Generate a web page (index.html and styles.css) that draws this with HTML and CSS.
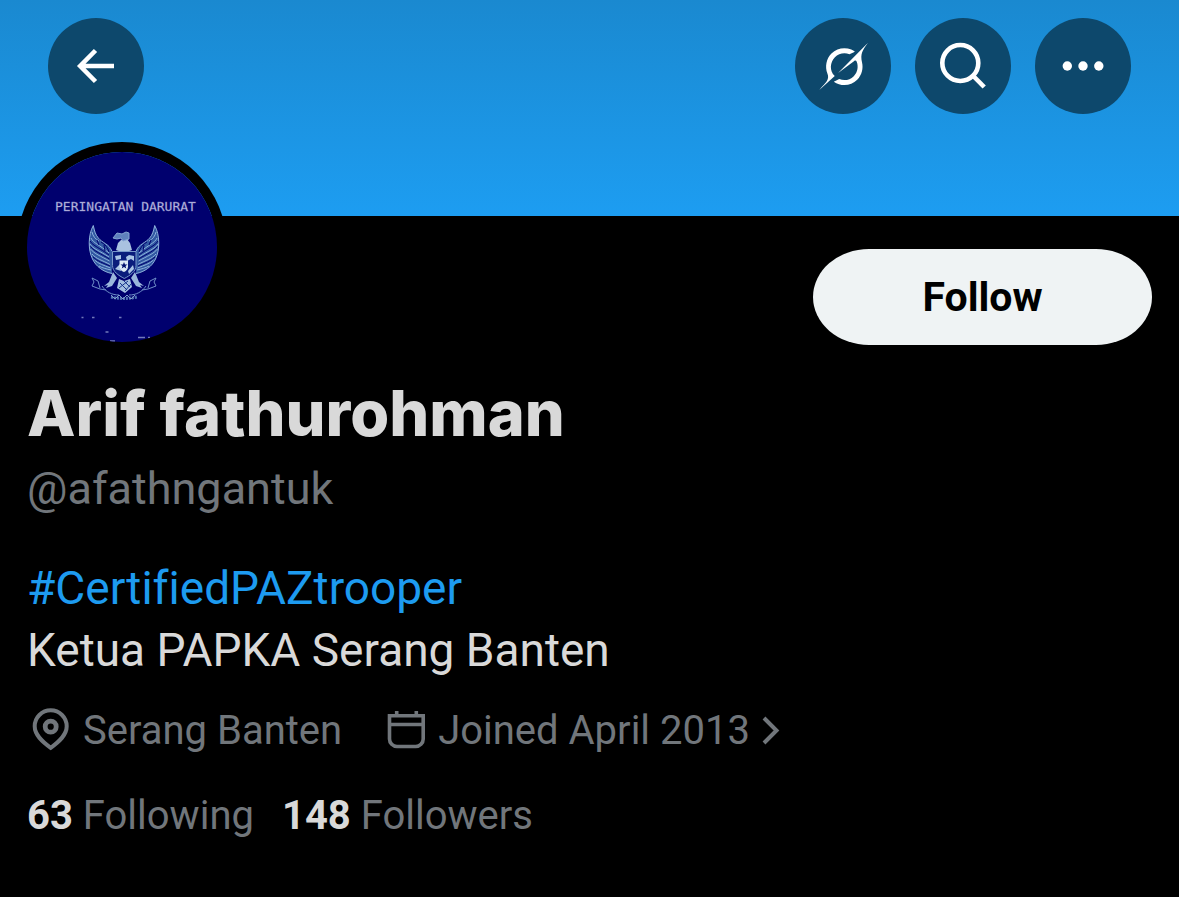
FILE: index.html
```html
<!DOCTYPE html>
<html lang="en">
<head>
<meta charset="utf-8">
<meta name="viewport" content="width=device-width, initial-scale=1">
<title>Arif fathurohman (@afathngantuk)</title>
<link rel="stylesheet" href="styles.css">
</head>
<body>
<header class="banner">
  <button class="round-button" type="button" aria-label="Back">
    <svg viewBox="0 0 96 96" fill="none" stroke="currentColor" stroke-width="4.6"><path d="M47.5 32.5 32.2 48l15.3 15.5M32.5 48H66"/></svg>
  </button>
  <div class="banner-actions">
    <button class="round-button" type="button" aria-label="Grok">
      <svg viewBox="0 0 96 96" fill="currentColor"><path transform="translate(24.3 24.7) scale(1.476)" d="M12.745 20.54l10.97-8.19c.539-.4 1.307-.244 1.564.38 1.349 3.288.746 7.241-1.938 9.955-2.683 2.714-6.417 3.31-9.83 1.954l-3.728 1.745c5.347 3.697 11.84 2.782 15.898-1.324 3.219-3.255 4.216-7.692 3.284-11.693l.008.009c-1.351-5.878.332-8.227 3.782-13.031L33 0l-4.54 4.59v-.014L12.743 20.544M10.48 22.531c-3.837-3.707-3.175-9.446.1-12.755 2.42-2.449 6.388-3.448 9.852-1.979l3.72-1.737c-.67-.49-1.53-1.017-2.515-1.387-4.455-1.854-9.789-.931-13.41 2.728-3.483 3.523-4.579 8.94-2.697 13.561 1.405 3.454-.899 5.898-3.22 8.364C1.49 30.2.666 31.074 0 32l10.478-9.466"/></svg>
    </button>
    <button class="round-button" type="button" aria-label="Search">
      <svg viewBox="0 0 96 96" fill="none" stroke="currentColor" stroke-width="4.6"><circle cx="45.3" cy="45" r="18"/><path d="M57.8 57.5 69.2 69"/></svg>
    </button>
    <button class="round-button" type="button" aria-label="More">
      <svg viewBox="0 0 96 96" fill="currentColor"><circle cx="32.3" cy="48" r="4.7"/><circle cx="48" cy="48" r="4.7"/><circle cx="63.8" cy="48" r="4.7"/></svg>
    </button>
  </div>
</header>
<main class="profile">
  <div class="profile-top">
    <svg class="avatar" viewBox="0 0 190 190" role="img" aria-label="Peringatan Darurat">
      <rect width="190" height="190" fill="#00006e"/>
      <text class="avatar-text" x="98.500" y="59" text-anchor="middle">PERINGATAN DARURAT</text>
      <defs>
        <g id="wing">
          <path fill="#3158a2" d="M66.300 73.500C61 83 61 98 65.500 107c3.500 7.500 11 13 19.500 14.500V99c-3-8-11-7-15-14.500-2-4-2.500-8-3.700-11z"/>
          <g fill="none" stroke="#8fb2dc" stroke-width="1">
            <path d="M66.300 73.500C61 83 61 98 65.500 107c3.500 7.500 11 13 19.500 14.500M66.300 73.500c1 5 2 9 5 12.500 4 5 11 6 13.500 13"/>
            <path d="M64 86c2 5 9 7 18 15M63 92c3 5 10 7 19 13M63.500 97c4 5 10 7 19 12M65 102c4 5 10 6 18 10.500M67.500 108c4 4 9 5 16 8M72 114c3 2 8 3 12 4M65 80c1 4 3 7 7 9"/>
          </g>
          <path fill="none" stroke="#00006e" stroke-width="1" d="M63 89c3 5 10 7 19 14M63.500 94.500c4 5 10 7 19 12.500M66 105c4 4 10 6 17 9M74 90c4 2 7 6 8 10M70 88l2 5M77 93l1 6"/>
          <path fill="#9ab6db" d="M86 120l4 6-5 8-6 2 2-3-4 1 5-4z"/>
          <path fill="none" stroke="#6f8fc8" stroke-width="1" d="M65 126l6 3 2 7M65 126l2 4-2 4 8 3M73 137l6 1M75 134c4 6 10 9 17 9"/>
        </g>
      </defs>
      <use href="#wing"/>
      <use href="#wing" transform="matrix(-1 0 0 1 194 0)"/>
      <path fill="#a9c2e0" d="M89 98l2-7 3-3 6-1 3 4 2 7c-5 2-11 2-16 0z"/>
      <path fill="#5f80bd" stroke="#86a4d2" stroke-width="1" d="M86 86l4-5 5 1 4-2 3 1v6l-6 2-2-3-4 1z"/>
      <path fill="#0a1d7c" stroke="#7898ca" stroke-width="1" d="M85.500 99.500H109v14c0 6-6 10-11.700 13-5.800-3-11.800-7-11.800-13z"/>
      <path fill="#aac5e5" d="M88 104l6-1v4l-5 1zM99 105l3-2 5 1v5l-3-2-4 2zM88 117l5-5 1 7zM101 119l5-6 1 4-5 5z"/>
      <path fill="#deebf5" d="M92.500 108.500h8.500v6c0 3-2 4.500-4 5.500-2.500-1-4.500-2.500-4.500-5.500z"/>
      <path fill="#00106c" d="M97 110l1 2.500h2.500l-2 1.500.8 2.500-2.300-1.500-2.300 1.500.8-2.500-2-1.500H96z"/>
      <path fill="#a3bee0" d="M92 127l5 2 6-2 2 8-7 6-8-5z"/>
      <path stroke="#18358c" stroke-width="1" d="M93 131l7 7M97 129l6 6M101 129l-9 7M104 132l-6 7"/>
      <path fill="none" stroke="#5273b4" stroke-width="3" stroke-dasharray="2 1" d="M84 145q13 3 26 0"/>
      <path fill="none" stroke="#7e9ccb" stroke-width="1" d="M84 143l4 4 4-4 4 4 4-4 4 4 4-4"/>
      <path stroke="#7179ba" stroke-width="1.500" d="M54.500 165.500h2M65 165.500h2.500M92 165.500h2.500M78.500 180h3M111 185.500h7M121 185.500h2M83 189h5"/>
    </svg>
    <button class="follow" type="button">Follow</button>
  </div>
  <h1 class="name">Arif fathurohman</h1>
  <p class="handle">@afathngantuk</p>
  <p class="bio"><a href="#CertifiedPAZtrooper">#CertifiedPAZtrooper</a><br>Ketua PAPKA Serang Banten</p>
  <div class="meta">
    <span class="meta-item">
      <svg class="meta-icon" viewBox="0 0 48 48" fill="none" stroke="currentColor" stroke-width="4" aria-hidden="true"><path d="M23.700 40.800C15 34.500 7.700 28 7.700 19.300a16 16 0 0 1 32 0c0 8.700-7.300 15.200-16 21.500z"/><circle cx="23.700" cy="19.700" r="5.500" stroke-width="4.800"/></svg>
      Serang Banten
    </span>
    <a class="meta-item" href="#joined">
      <svg class="meta-icon" viewBox="0 0 48 48" fill="none" stroke="currentColor" stroke-width="3.600" aria-hidden="true"><path d="M7.500 8.800h33.700V32a7.500 7.500 0 0 1-7.500 7.500H15A7.500 7.500 0 0 1 7.500 32zM7.500 17.500h33.700M14.700 4v4M34.300 4v4"/></svg>
      Joined April 2013
      <svg class="chevron" viewBox="0 0 20 48" fill="none" stroke="currentColor" stroke-width="4" aria-hidden="true"><path d="M2 11l12.500 12.500L2 36"/></svg>
    </a>
  </div>
  <div class="stats">
    <a href="#following"><strong>63</strong> Following</a>
    <a href="#followers"><strong>148</strong> Followers</a>
  </div>
</main>
</body>
</html>
```

FILE: styles.css
```css
* { box-sizing: border-box; }

body {
  margin: 0;
  background: #000;
  color: #d9d9d9;
  font-family: Roboto, "Liberation Sans", sans-serif;
  font-variant-ligatures: none;
}

h1, p { margin: 0; }

a { color: inherit; text-decoration: none; }

button {
  border: 0;
  padding: 0;
  font: inherit;
  cursor: pointer;
}

svg { display: block; flex: none; }

.banner {
  display: flex;
  justify-content: space-between;
  height: 216px;
  padding: 18px 48px;
  background: linear-gradient(#1a89d0, #1d9df1);
}

.banner-actions { display: flex; gap: 24px; }

.round-button {
  width: 96px;
  height: 96px;
  border-radius: 50%;
  background: #0d486c;
  color: #fff;
}

.profile { padding: 0 27px 48px; }

.profile-top {
  display: flex;
  justify-content: space-between;
  align-items: flex-start;
}

.avatar {
  width: 190px;
  height: 190px;
  margin-top: -64px;
  border-radius: 50%;
  box-shadow: 0 0 0 10px #000;
}

.avatar-text {
  fill: #c4c4e4;
  stroke: #7070b8;
  stroke-width: 0.3px;
  font-family: "DejaVu Sans Mono", monospace;
  font-size: 13px;
}

.follow {
  width: 339px;
  height: 96px;
  margin-top: 33px;
  border-radius: 56px / 48px;
  background: #eff3f4;
  color: #000;
  font-size: 41px;
  font-weight: 700;
}

.name {
  margin-top: 28px;
  font-family: Inter, Roboto, sans-serif;
  font-size: 63px;
  font-weight: 800;
  line-height: 80px;
}

.handle {
  color: #71767b;
  font-size: 45px;
  line-height: 72px;
}

.bio {
  margin-top: 32px;
  font-size: 46px;
  line-height: 62px;
}

.bio a { color: #1d9bf0; }

.meta {
  display: flex;
  flex-wrap: wrap;
  gap: 40px;
  margin-top: 26px;
  color: #71767b;
  font-size: 40px;
  line-height: 48px;
}

.meta-item {
  display: flex;
  align-items: center;
  gap: 8px;
}

.meta-icon { width: 48px; height: 48px; }

.chevron { width: 20px; height: 48px; margin-left: 4px; }

.stats {
  display: flex;
  flex-wrap: wrap;
  gap: 28px;
  margin-top: 37px;
  color: #71767b;
  font-size: 40px;
  line-height: 48px;
}

.stats strong { color: #d9d9d9; font-weight: 700; }
```
